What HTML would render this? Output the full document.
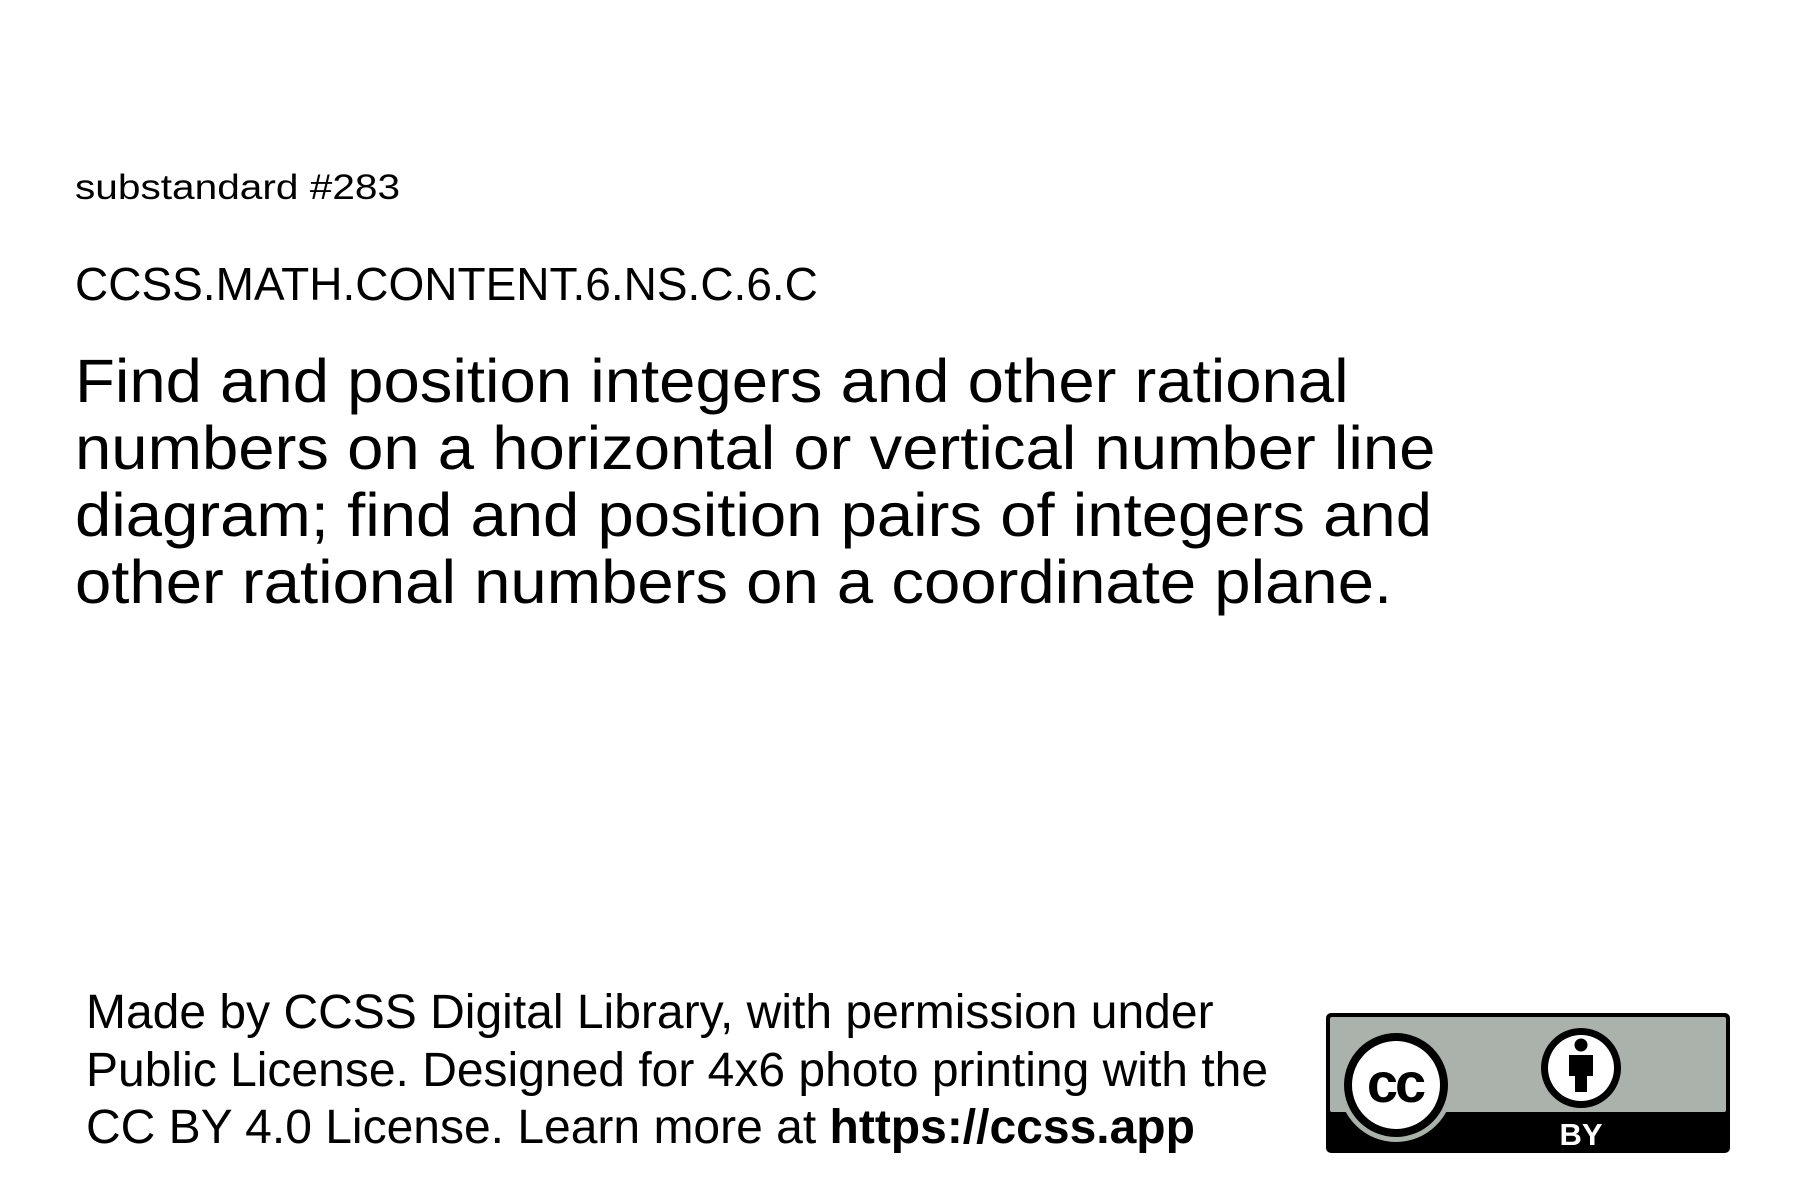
<!DOCTYPE html>
<html><head><meta charset="utf-8"><style>
html,body{margin:0;padding:0;background:#fff;width:1800px;height:1200px;overflow:hidden;position:relative;font-family:"Liberation Sans",sans-serif;color:#000}
.t{position:absolute;left:75px;white-space:nowrap}
#s{top:168px;font-size:35px;transform:scaleX(1.16);transform-origin:left}
#c{top:257px;font-size:46px;transform:scaleX(1.0);transform-origin:left}
#m{top:348px;font-size:61px;line-height:67px;transform:scaleX(1.07);transform-origin:left}
#f{left:86px;top:984px;font-size:48px;line-height:57.5px}
</style></head><body>
<div class="t" id="s">substandard #283</div>
<div class="t" id="c">CCSS.MATH.CONTENT.6.NS.C.6.C</div>
<div class="t" id="m">Find and position integers and other rational<br>numbers on a horizontal or vertical number line<br>diagram; find and position pairs of integers and<br>other rational numbers on a coordinate plane.</div>
<div class="t" id="f">Made by CCSS Digital Library, with permission under<br>Public License. Designed for 4x6 photo printing with the<br>CC BY 4.0 License. Learn more at <b>https://ccss.app</b></div>
<svg style="position:absolute;left:0;top:0" width="1800" height="1200">
<rect x="1326" y="1013" width="404" height="140" rx="5" fill="#000"/>
<rect x="1330" y="1017" width="396" height="95" rx="2" fill="#aab2ab"/>
<circle cx="1396" cy="1085" r="57" fill="#aab2ab"/>
<circle cx="1396" cy="1085" r="52" fill="#000"/>
<circle cx="1396" cy="1085" r="44" fill="#fff"/>
<text x="1395" y="1102" text-anchor="middle" font-family="Liberation Sans" font-weight="bold" font-size="56" fill="#000" letter-spacing="-3">cc</text>
<circle cx="1581" cy="1068" r="40" fill="#000"/>
<circle cx="1581" cy="1068" r="33" fill="#fff"/>
<circle cx="1581" cy="1045" r="6.5" fill="#000"/>
<path d="M1569 1055h24v21h-6v16h-12v-16h-6z" fill="#000"/>
<text x="1581" y="1145" text-anchor="middle" font-family="Liberation Sans" font-weight="bold" font-size="31" fill="#fff">BY</text>
</svg>
</body></html>
